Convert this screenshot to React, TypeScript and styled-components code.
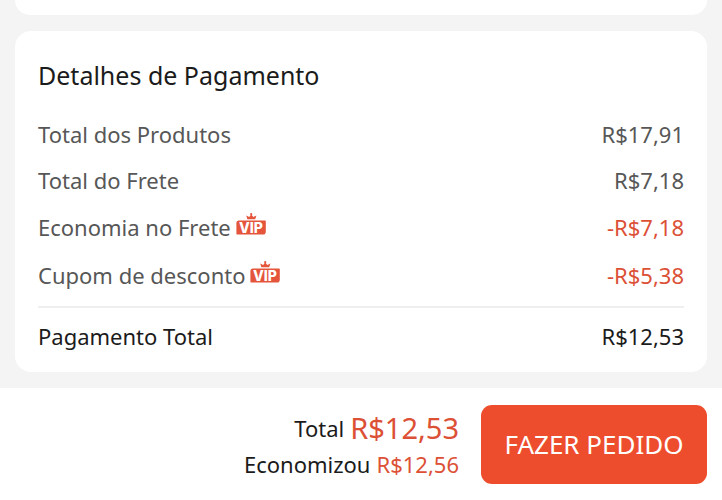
import React from "react";
import styled, { createGlobalStyle } from "styled-components";

const GlobalStyle = createGlobalStyle`
  * { box-sizing: border-box; }
  body { margin: 0; background: #f4f4f4; font-family: "Noto Sans", sans-serif; color: #1b1b1b; }
`;
const Page = styled.div`
  min-height: 100vh;
  display: flex;
  flex-direction: column;
`;
const Content = styled.main`
  flex: 1;
  display: flex;
  flex-direction: column;
  gap: 16px;
  padding: 0 15px 16px;
`;
const PreviousCard = styled.div`
  height: 15px;
  background: #fff;
  border-radius: 0 0 16px 16px;
`;
const Card = styled.section`
  background: #fff;
  border-radius: 16px;
  padding: 24px 23px 8px;
`;
const Title = styled.h2`
  margin: 0 0 16px;
  font-size: 25px;
  line-height: 40px;
  font-weight: 400;
`;
const Row = styled.div<{ $vip?: boolean }>`
  display: flex;
  justify-content: space-between;
  align-items: center;
  height: ${(p) => (p.$vip ? "48px" : "46px")};
  font-size: 22px;
  line-height: 32px;
  color: #575757;
`;
const TotalRow = styled(Row)`
  height: 58px;
  margin-top: 7px;
  border-top: 2px solid #efefef;
  color: #1b1b1b;
`;
const Label = styled.span`
  display: flex;
  align-items: center;
  gap: 5px;
`;
const Badge = styled.svg`
  width: 30px;
  height: 22px;
  margin-bottom: 6px;
`;
const BadgeText = styled.text`
  font: 800 14px Inter, sans-serif;
  fill: #fff;
`;
const Amount = styled.span<{ $discount?: boolean }>`
  color: ${(p) => (p.$discount ? "#dc5136" : "inherit")};
`;
const Footer = styled.footer`
  display: flex;
  justify-content: flex-end;
  align-items: center;
  gap: 22px;
  min-height: 112px;
  padding: 0 15px;
  background: #fff;
`;
const Summary = styled.div`
  padding-top: 4px;
`;
const SummaryLine = styled.div`
  display: flex;
  justify-content: flex-end;
  align-items: center;
  gap: 6px;
  font-size: 22px;
  line-height: 36px;
`;
const Price = styled.span<{ $large?: boolean }>`
  color: #dc5136;
  font-size: ${(p) => (p.$large ? "29px" : "22px")};
`;
const OrderButton = styled.button`
  width: 226px;
  height: 79px;
  border: 0;
  border-radius: 11px;
  background: #ee4d2d;
  color: #fff;
  font: 400 26px "Noto Sans", sans-serif;
`;

function VipBadge() {
  return (
    <Badge viewBox="0 0 30 22">
      <path
        d="M10.2 2.4 13.2 4 15.2 1.4 17.4 4 20.4 2.4 19.2 6.2H11.4Z"
        fill="#e4553b"
      />
      <circle cx="15.2" cy="1.2" r="1.1" fill="#e4553b" />
      <path
        d="M3 7.6H29Q29.8 7.6 29.8 8.6V18.5Q29.8 21.6 27 21.6H1.2Q0.4 21.6 0.4 20.6V10.4Q0.4 7.6 3 7.6Z"
        fill="#e4553b"
      />
      <BadgeText x="15" y="19.6" textAnchor="middle">VIP</BadgeText>
    </Badge>
  );
}

export default function App() {
  return (
    <>
      <GlobalStyle />
      <Page>
        <Content>
          <PreviousCard />
          <Card>
            <Title>Detalhes de Pagamento</Title>
            <Row><Label>Total dos Produtos</Label><Amount>R$17,91</Amount></Row>
            <Row><Label>Total do Frete</Label><Amount>R$7,18</Amount></Row>
            <Row $vip><Label>Economia no Frete<VipBadge /></Label><Amount $discount>-R$7,18</Amount></Row>
            <Row $vip><Label>Cupom de desconto<VipBadge /></Label><Amount $discount>-R$5,38</Amount></Row>
            <TotalRow><Label>Pagamento Total</Label><Amount>R$12,53</Amount></TotalRow>
          </Card>
        </Content>
        <Footer>
          <Summary>
            <SummaryLine>Total <Price $large>R$12,53</Price></SummaryLine>
            <SummaryLine>Economizou <Price>R$12,56</Price></SummaryLine>
          </Summary>
          <OrderButton type="button">FAZER PEDIDO</OrderButton>
        </Footer>
      </Page>
    </>
  );
}
